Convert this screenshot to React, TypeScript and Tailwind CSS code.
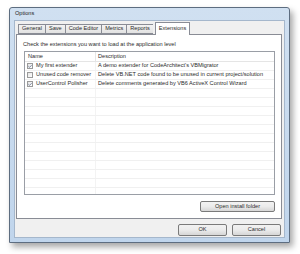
import { Check } from "lucide-react";

const tabs = ["General", "Save", "Code Editor", "Metrics", "Reports", "Extensions"];

const extensions = [
  { name: "My first extender", desc: "A demo extender for CodeArchitect's VBMigrator", on: true },
  { name: "Unused code remover", desc: "Delete VB.NET code found to be unused in current project/solution", on: false },
  { name: "UserControl Polisher", desc: "Delete comments generated by VB6 ActiveX Control Wizard", on: true },
];

function Box({ on }: { on: boolean }) {
  return (
    <span className="w-[6px] h-[6px] border border-[#9a9a9a] bg-gradient-to-br from-[#e6e6e6] to-white flex items-center justify-center shrink-0">
      {on && <Check className="w-[5px] h-[5px] text-[#3b4e74]" strokeWidth={4} />}
    </span>
  );
}

export default function App() {
  const blank = Array.from({ length: 12 });
  return (
    <div className="w-[300px] h-[254px] bg-white pt-[7px] pl-[9px] font-['Liberation_Sans',Arial,sans-serif] text-[5.6px] text-[#2b2b2b] leading-none">
      <div className="w-[281px] h-[236px] border border-[#5d6d80] rounded-t-[3px] bg-gradient-to-b from-[#d0e0f1] to-[#c0d5ec] shadow-[3px_4px_6px_rgba(0,0,0,0.35)] flex flex-col px-[4px] pb-[4px]">
        <div className="h-[12px] flex items-center pl-[1px] text-[#1e1e1e]">Options</div>
        <div className="flex-1 bg-[#f0f0f0] border border-[#a5b7cc] flex flex-col pl-[1px] pr-[2px]">
          {/* tabs */}
          <div className="flex items-end h-[13px] pl-[2px]">
            {tabs.map((t) =>
              t === "Extensions" ? (
                <div key={t} className="h-[13px] px-[3px] bg-white border border-b-0 border-[#898c95] -mb-px relative z-10 flex items-center ml-[2px]">
                  {t}
                </div>
              ) : (
                <div key={t} className="h-[10px] px-[3px] bg-gradient-to-b from-[#f3f3f3] to-[#e2e2e2] border border-[#898c95] border-r-0 last:border-r flex items-center">
                  {t}
                </div>
              )
            )}
          </div>
          <div className="h-[185px] bg-white border border-[#898c95] flex flex-col pl-[6px] pr-[6px]">
            <div className="pt-[7px] h-[16px]">Check the extensions you want to load at the application level</div>
            <div className="h-[144px] border border-[#9a9ea6] ml-[1px] overflow-hidden">
              <div className="h-[10px] flex items-center border-b border-[#e5e5e5]">
                <div className="w-[71px] pl-[3px] border-r border-[#e5e5e5] h-full flex items-center">Name</div>
                <div className="pl-[2px]">Description</div>
              </div>
              {extensions.map((e) => (
                <div key={e.name} className="h-[9px] flex items-center border-b border-[#f0f0f0]">
                  <div className="w-[71px] pl-[2px] border-r border-[#f3f3f3] h-full flex items-center gap-[3px]">
                    <Box on={e.on} />
                    <span>{e.name}</span>
                  </div>
                  <div className="pl-[2px] whitespace-nowrap">{e.desc}</div>
                </div>
              ))}
              {blank.map((_, i) => (
                <div key={i} className="h-[9px] flex border-b border-[#f0f0f0]">
                  <div className="w-[71px] border-r border-[#f3f3f3] h-full" />
                </div>
              ))}
            </div>
            <div className="flex justify-end mt-[6px]">
              <button className="w-[75px] h-[11px] border border-[#7a7a7a] rounded-[2px] bg-gradient-to-b from-[#f2f2f2] via-[#ebebeb] to-[#d6d6d6] flex items-center justify-center">
                Open install folder
              </button>
            </div>
          </div>
          <div className="flex justify-end gap-[5px] mt-[5px] pr-[1px]">
            <button className="w-[49px] h-[12px] border border-[#7a7a7a] rounded-[2px] bg-gradient-to-b from-[#f2f2f2] via-[#ebebeb] to-[#d6d6d6] flex items-center justify-center">
              OK
            </button>
            <button className="w-[49px] h-[12px] border border-[#7a7a7a] rounded-[2px] bg-gradient-to-b from-[#f2f2f2] via-[#ebebeb] to-[#d6d6d6] flex items-center justify-center">
              Cancel
            </button>
          </div>
        </div>
      </div>
    </div>
  );
}
